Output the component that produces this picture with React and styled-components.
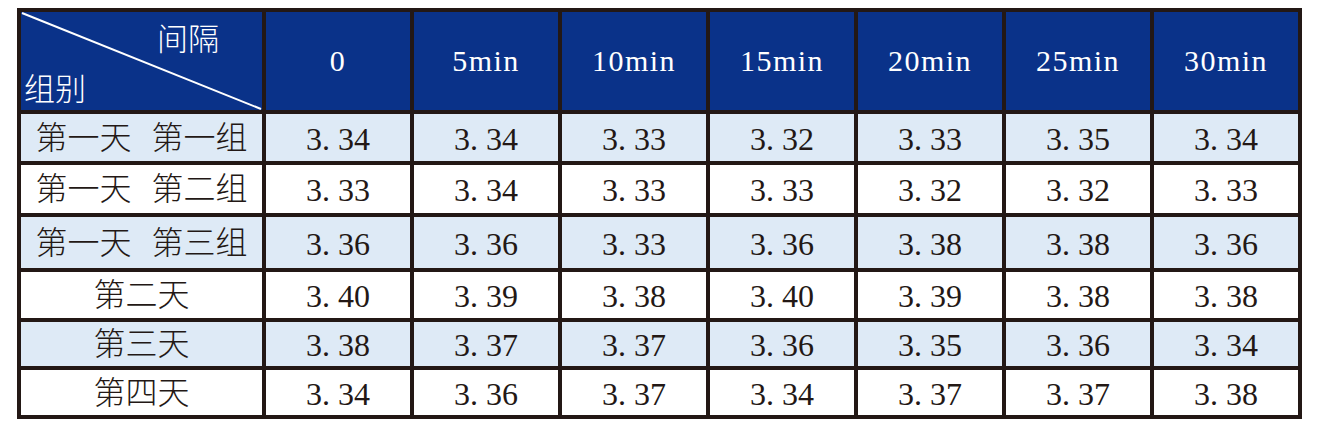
import React from 'react';
import styled, { createGlobalStyle } from 'styled-components';

const GlobalStyle = createGlobalStyle`
  body {
    margin: 0;
    background: #ffffff;
  }
`;

const Page = styled.div`
  padding: 8px 0 0 17px;
`;

const Sheet = styled.div`
  display: grid;
  grid-template-columns: 241px repeat(7, 144px);
  grid-template-rows: 98px 47px 48px 51px 46px 44px 45px;
  gap: 4px;
  padding: 4px;
  width: max-content;
  background: #231815;
`;

const HeadCell = styled.div`
  display: flex;
  align-items: center;
  justify-content: center;
  background: #0a3289;
  color: #ffffff;
  font-family: "Liberation Serif", serif;
  font-size: 30px;
  letter-spacing: 1.5px;
`;

const CornerCell = styled.div`
  position: relative;
  display: flex;
  flex-direction: column;
  justify-content: space-between;
  background: #0a3289;
  color: #ffffff;
  font-family: "Noto Sans CJK SC", sans-serif;
  font-weight: 300;
  font-size: 31px;
  line-height: 1;
  padding: 9px 0 8px 3px;
`;

const CornerLabel = styled.span`
  align-self: ${(p) => (p.$end ? 'flex-end' : 'flex-start')};
  margin-right: ${(p) => (p.$end ? '43px' : '0')};
`;

const Slash = styled.svg`
  position: absolute;
  inset: 0;
  width: 100%;
  height: 100%;
`;

const LabelCell = styled.div`
  display: flex;
  align-items: center;
  justify-content: center;
  padding-bottom: 6px;
  background: ${(p) => (p.$shade ? '#deeaf6' : '#ffffff')};
  color: #231815;
  font-family: "Noto Sans CJK SC", sans-serif;
  font-weight: 300;
  font-size: 32px;
  word-spacing: 13px;
  line-height: 1;
`;

const ValueCell = styled.div`
  display: flex;
  align-items: center;
  justify-content: center;
  padding-top: 2px;
  background: ${(p) => (p.$shade ? '#deeaf6' : '#ffffff')};
  color: #231815;
  font-family: "Liberation Serif", serif;
  font-size: 32px;
  line-height: 1;
`;

const intervals = ['0', '5min', '10min', '15min', '20min', '25min', '30min'];

const rows = [
  { label: '第一天 第一组', values: ['3.34', '3.34', '3.33', '3.32', '3.33', '3.35', '3.34'] },
  { label: '第一天 第二组', values: ['3.33', '3.34', '3.33', '3.33', '3.32', '3.32', '3.33'] },
  { label: '第一天 第三组', values: ['3.36', '3.36', '3.33', '3.36', '3.38', '3.38', '3.36'] },
  { label: '第二天', values: ['3.40', '3.39', '3.38', '3.40', '3.39', '3.38', '3.38'] },
  { label: '第三天', values: ['3.38', '3.37', '3.37', '3.36', '3.35', '3.36', '3.34'] },
  { label: '第四天', values: ['3.34', '3.36', '3.37', '3.34', '3.37', '3.37', '3.38'] },
];

export default function App() {
  return (
    <Page>
      <GlobalStyle />
      <Sheet>
        <CornerCell>
          <Slash viewBox="0 0 241 98" preserveAspectRatio="none">
            <line x1="1" y1="1" x2="240" y2="97" stroke="#ffffff" strokeWidth="2" />
          </Slash>
          <CornerLabel $end>间隔</CornerLabel>
          <CornerLabel>组别</CornerLabel>
        </CornerCell>
        {intervals.map((t) => (
          <HeadCell key={t}>{t}</HeadCell>
        ))}
        {rows.map((row, i) => (
          <React.Fragment key={row.label}>
            <LabelCell $shade={i % 2 === 0}>{row.label}</LabelCell>
            {row.values.map((v, j) => (
              <ValueCell key={j} $shade={i % 2 === 0}>
                {v.replace('.', '. ')}
              </ValueCell>
            ))}
          </React.Fragment>
        ))}
      </Sheet>
    </Page>
  );
}
